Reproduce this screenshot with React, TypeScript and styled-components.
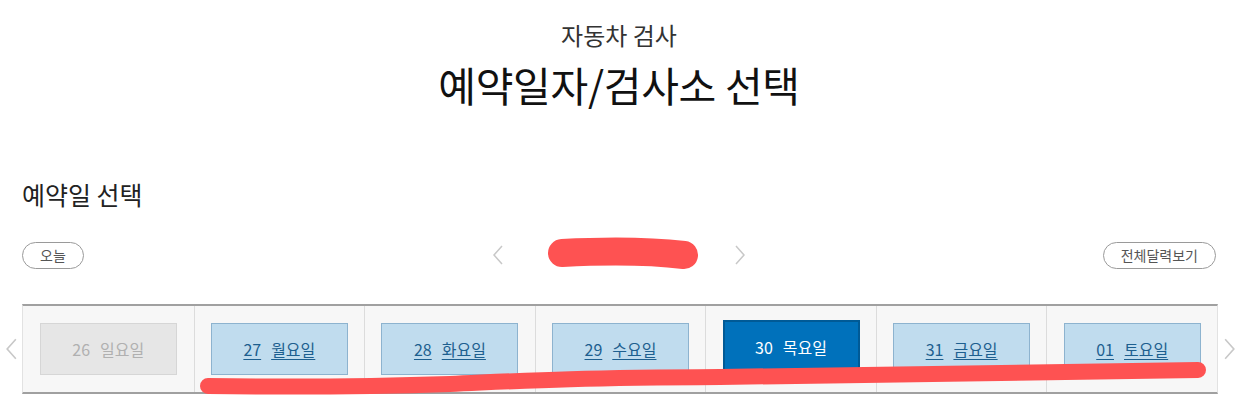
import React from 'react';
import styled, { createGlobalStyle } from 'styled-components';

const GlobalStyle = createGlobalStyle`
  html, body {
    margin: 0;
    padding: 0;
    background: #fff;
  }
  body {
    font-family: 'Noto Sans CJK KR', 'Noto Sans', sans-serif;
    color: #222;
  }
`;

const Page = styled.div`
  position: relative;
  width: 1249px;
  height: 407px;
  overflow: hidden;
`;

const Header = styled.header`
  width: 1194px;
  margin-left: 22px;
  padding-top: 19px;
  text-align: center;
`;

const SubTitle = styled.p`
  margin: 0;
  font-size: 24px;
  line-height: 32px;
  color: #333;
`;

const Title = styled.h1`
  margin: 7px 0 0;
  font-size: 41px;
  font-weight: 400;
  line-height: 52px;
  color: #111;
  letter-spacing: -0.3px;
`;

const Section = styled.section`
  width: 1194px;
  margin-left: 22px;
  margin-top: 67px;
`;

const SectionTitle = styled.h2`
  margin: 0;
  font-size: 25px;
  font-weight: 400;
  line-height: 34px;
  color: #222;
`;

const Controls = styled.div`
  display: grid;
  grid-template-columns: 1fr auto 1fr;
  align-items: center;
  margin-top: 29px;
  height: 30px;
`;

const PillButton = styled.button<{ $align: 'start' | 'end' }>`
  justify-self: ${(p) => p.$align};
  height: 27px;
  padding: 0 17px;
  border: 1px solid #9a9a9a;
  border-radius: 14px;
  background: #fff;
  font-family: inherit;
  font-size: 14px;
  color: #555;
  line-height: 25px;
`;

const MonthNav = styled.div`
  display: flex;
  align-items: center;
  gap: 40px;
`;

const Month = styled.span`
  display: inline-block;
  width: 150px;
  height: 24px;
`;

const Chevron = ({ dir, h = 20 }: { dir: 'left' | 'right'; h?: number }) => (
  <svg width={h / 2 + 2} height={h} viewBox="0 0 12 20" fill="none">
    <path
      d={dir === 'left' ? 'M10 1 L2 10 L10 19' : 'M2 1 L10 10 L2 19'}
      stroke="#c8c8c8"
      strokeWidth="1.5"
    />
  </svg>
);

const StripRow = styled.div`
  display: flex;
  align-items: center;
  margin-top: 34px;
`;

const SideArrow = styled.div`
  width: 22px;
  display: flex;
  justify-content: center;
`;

const Strip = styled.ul`
  display: grid;
  grid-template-columns: repeat(7, 1fr);
  width: 1194px;
  margin: 0;
  padding: 0;
  list-style: none;
  border-top: 2px solid #a0a0a0;
  border-bottom: 2px solid #a0a0a0;
  border-left: 1px solid #e2e2e2;
  border-right: 1px solid #e2e2e2;
  background: #f7f7f7;
`;

const Cell = styled.li`
  display: flex;
  align-items: center;
  justify-content: center;
  height: 86px;
  border-left: 1px solid #dcdcdc;
  &:first-child {
    border-left: none;
  }
`;

type DayState = 'disabled' | 'open' | 'active';

const DayButton = styled.a<{ $state: DayState }>`
  display: flex;
  align-items: center;
  justify-content: center;
  gap: 10px;
  box-sizing: border-box;
  width: 137px;
  height: 52px;
  font-size: 16px;
  text-decoration: none;
  border: 1px solid
    ${(p) =>
      p.$state === 'disabled' ? '#d6d6d6' : p.$state === 'active' ? '#005a96' : '#8db3cf'};
  background: ${(p) =>
    p.$state === 'disabled' ? '#e6e6e6' : p.$state === 'active' ? '#0071bb' : '#c0dcee'};
  color: ${(p) =>
    p.$state === 'disabled' ? '#b0b0b0' : p.$state === 'active' ? '#fff' : '#1d5f8f'};
  ${(p) => p.$state === 'active' && 'border-width: 2px; height: 54px; margin-top: -5px;'}

  span {
    text-decoration: ${(p) => (p.$state === 'open' ? 'underline' : 'none')};
    text-underline-offset: 3px;
  }
`;

const Redaction = styled.svg`
  position: absolute;
  left: 0;
  top: 0;
  pointer-events: none;
`;

const days: { num: string; name: string; state: DayState }[] = [
  { num: '26', name: '일요일', state: 'disabled' },
  { num: '27', name: '월요일', state: 'open' },
  { num: '28', name: '화요일', state: 'open' },
  { num: '29', name: '수요일', state: 'open' },
  { num: '30', name: '목요일', state: 'active' },
  { num: '31', name: '금요일', state: 'open' },
  { num: '01', name: '토요일', state: 'open' },
];

const App = () => (
  <Page>
    <GlobalStyle />
    <Header>
      <SubTitle>자동차 검사</SubTitle>
      <Title>예약일자/검사소 선택</Title>
    </Header>

    <Section>
      <SectionTitle>예약일 선택</SectionTitle>
      <Controls>
        <PillButton $align="start">오늘</PillButton>
        <MonthNav>
          <Chevron dir="left" />
          <Month />
          <Chevron dir="right" />
        </MonthNav>
        <PillButton $align="end">전체달력보기</PillButton>
      </Controls>
    </Section>

    <StripRow>
      <SideArrow>
        <Chevron dir="left" h={22} />
      </SideArrow>
      <Strip>
        {days.map((d) => (
          <Cell key={d.num}>
            <DayButton $state={d.state}>
              <span>{d.num}</span>
              <span>{d.name}</span>
            </DayButton>
          </Cell>
        ))}
      </Strip>
      <SideArrow>
        <Chevron dir="right" h={22} />
      </SideArrow>
    </StripRow>

    <Redaction width="1249" height="407">
      <path
        d="M562 253 C600 251, 650 251, 684 255"
        stroke="#fe5252"
        strokeWidth="28"
        strokeLinecap="round"
        fill="none"
      />
      <path
        d="M208 386 C280 387, 360 387, 450 384 C520 381, 560 378, 720 377 C850 376, 1000 374, 1198 370"
        stroke="#fe5252"
        strokeWidth="16"
        strokeLinecap="round"
        fill="none"
      />
    </Redaction>
  </Page>
);

export default App;
